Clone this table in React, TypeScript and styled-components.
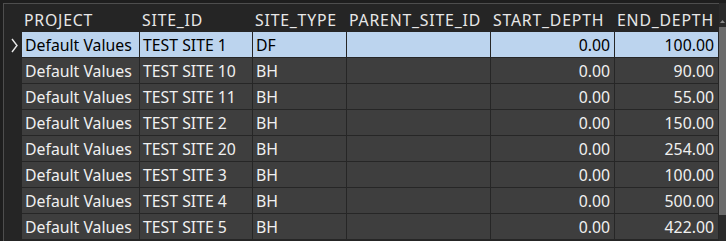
import React from 'react';
import { styled, createGlobalStyle } from 'styled-components';

const GlobalStyle = createGlobalStyle`
  html, body {
    margin: 0;
    padding: 0;
    background: #1e1e1e;
    overflow: hidden;
  }
`;

interface SiteRow {
  project: string;
  siteId: string;
  siteType: string;
  parentSiteId: string;
  startDepth: number;
  endDepth: number;
}

const rows: SiteRow[] = [
  { project: 'Default Values', siteId: 'TEST SITE 1', siteType: 'DF', parentSiteId: '', startDepth: 0, endDepth: 100 },
  { project: 'Default Values', siteId: 'TEST SITE 10', siteType: 'BH', parentSiteId: '', startDepth: 0, endDepth: 90 },
  { project: 'Default Values', siteId: 'TEST SITE 11', siteType: 'BH', parentSiteId: '', startDepth: 0, endDepth: 55 },
  { project: 'Default Values', siteId: 'TEST SITE 2', siteType: 'BH', parentSiteId: '', startDepth: 0, endDepth: 150 },
  { project: 'Default Values', siteId: 'TEST SITE 20', siteType: 'BH', parentSiteId: '', startDepth: 0, endDepth: 254 },
  { project: 'Default Values', siteId: 'TEST SITE 3', siteType: 'BH', parentSiteId: '', startDepth: 0, endDepth: 100 },
  { project: 'Default Values', siteId: 'TEST SITE 4', siteType: 'BH', parentSiteId: '', startDepth: 0, endDepth: 500 },
  { project: 'Default Values', siteId: 'TEST SITE 5', siteType: 'BH', parentSiteId: '', startDepth: 0, endDepth: 422 },
];

const COLUMNS = '18px 118px 113px 94px 144px 124px 104px';

const Frame = styled.div`
  display: flex;
  height: 241px;
  padding: 3px 0 0 3px;
  box-sizing: border-box;
  background: #1e1e1e;
  font-family: 'Noto Sans', 'Open Sans', sans-serif;
  font-size: 15.8px;
`;

const GridArea = styled.div`
  flex: 1;
  display: flex;
  flex-direction: column;
  border-top: 1px solid #4e4e4e;
  border-left: 1px solid #4e4e4e;
  background: #252525;
  overflow: hidden;
`;

const HeaderRow = styled.div`
  display: grid;
  grid-template-columns: ${COLUMNS};
  height: 28px;
  flex-shrink: 0;
`;

const HeaderCell = styled.div`
  display: flex;
  align-items: center;
  padding: 3px 0 0 2px;
  color: #e8e8e8;
  letter-spacing: 0.8px;
  white-space: nowrap;
  overflow: hidden;
`;

const DataRow = styled.div`
  display: grid;
  grid-template-columns: ${COLUMNS};
  height: 26px;
  flex-shrink: 0;
`;

const RowHeader = styled.div`
  display: flex;
  align-items: center;
  justify-content: flex-end;
  padding-right: 4px;
`;

const Cell = styled.div<{ $selected?: boolean; $numeric?: boolean }>`
  display: flex;
  align-items: center;
  justify-content: ${(p) => (p.$numeric ? 'flex-end' : 'flex-start')};
  padding: ${(p) => (p.$numeric ? '1px 4px 0 0' : '1px 0 0 3px')};
  background: ${(p) => (p.$selected ? '#bcd4ee' : '#3e3e3e')};
  color: ${(p) => (p.$selected ? '#000000' : '#f0f0f0')};
  border-right: 1px solid #262626;
  border-bottom: 1px solid #262626;
  white-space: nowrap;
  overflow: hidden;
`;

const ScrollTrack = styled.div`
  width: 7px;
  flex-shrink: 0;
  display: flex;
  flex-direction: column;
  background: #2a2a2a;
  padding-top: 14px;
`;

const ScrollArrow = styled.div`
  height: 8px;
  display: flex;
  justify-content: center;
  align-items: center;
`;

const ScrollThumb = styled.div`
  margin-top: 2px;
  height: 188px;
  background: #6b6b6b;
`;

// current-row marker in the row header column
const Chevron = () => (
  <svg width="7" height="15" viewBox="0 0 7 15">
    <path d="M1 1 L6 7.5 L1 14" fill="none" stroke="#e8e8e8" strokeWidth="1.4" />
  </svg>
);

const fmt = (n: number) => n.toFixed(2);

export default function App() {
  return (
    <>
      <GlobalStyle />
      <Frame>
        <GridArea>
          <HeaderRow>
            <HeaderCell />
            <HeaderCell>PROJECT</HeaderCell>
            <HeaderCell>SITE_ID</HeaderCell>
            <HeaderCell>SITE_TYPE</HeaderCell>
            <HeaderCell>PARENT_SITE_ID</HeaderCell>
            <HeaderCell>START_DEPTH</HeaderCell>
            <HeaderCell>END_DEPTH</HeaderCell>
          </HeaderRow>
          {rows.map((row, i) => {
            const sel = i === 0;
            return (
              <DataRow key={row.siteId}>
                <RowHeader>{sel && <Chevron />}</RowHeader>
                <Cell $selected={sel}>{row.project}</Cell>
                <Cell $selected={sel}>{row.siteId}</Cell>
                <Cell $selected={sel}>{row.siteType}</Cell>
                <Cell $selected={sel}>{row.parentSiteId}</Cell>
                <Cell $selected={sel} $numeric>{fmt(row.startDepth)}</Cell>
                <Cell $selected={sel} $numeric>{fmt(row.endDepth)}</Cell>
              </DataRow>
            );
          })}
        </GridArea>
        <ScrollTrack>
          <ScrollArrow>
            <svg width="5" height="3" viewBox="0 0 5 3">
              <path d="M0 3 L2.5 0 L5 3 Z" fill="#8a8a8a" />
            </svg>
          </ScrollArrow>
          <ScrollThumb />
        </ScrollTrack>
      </Frame>
    </>
  );
}
